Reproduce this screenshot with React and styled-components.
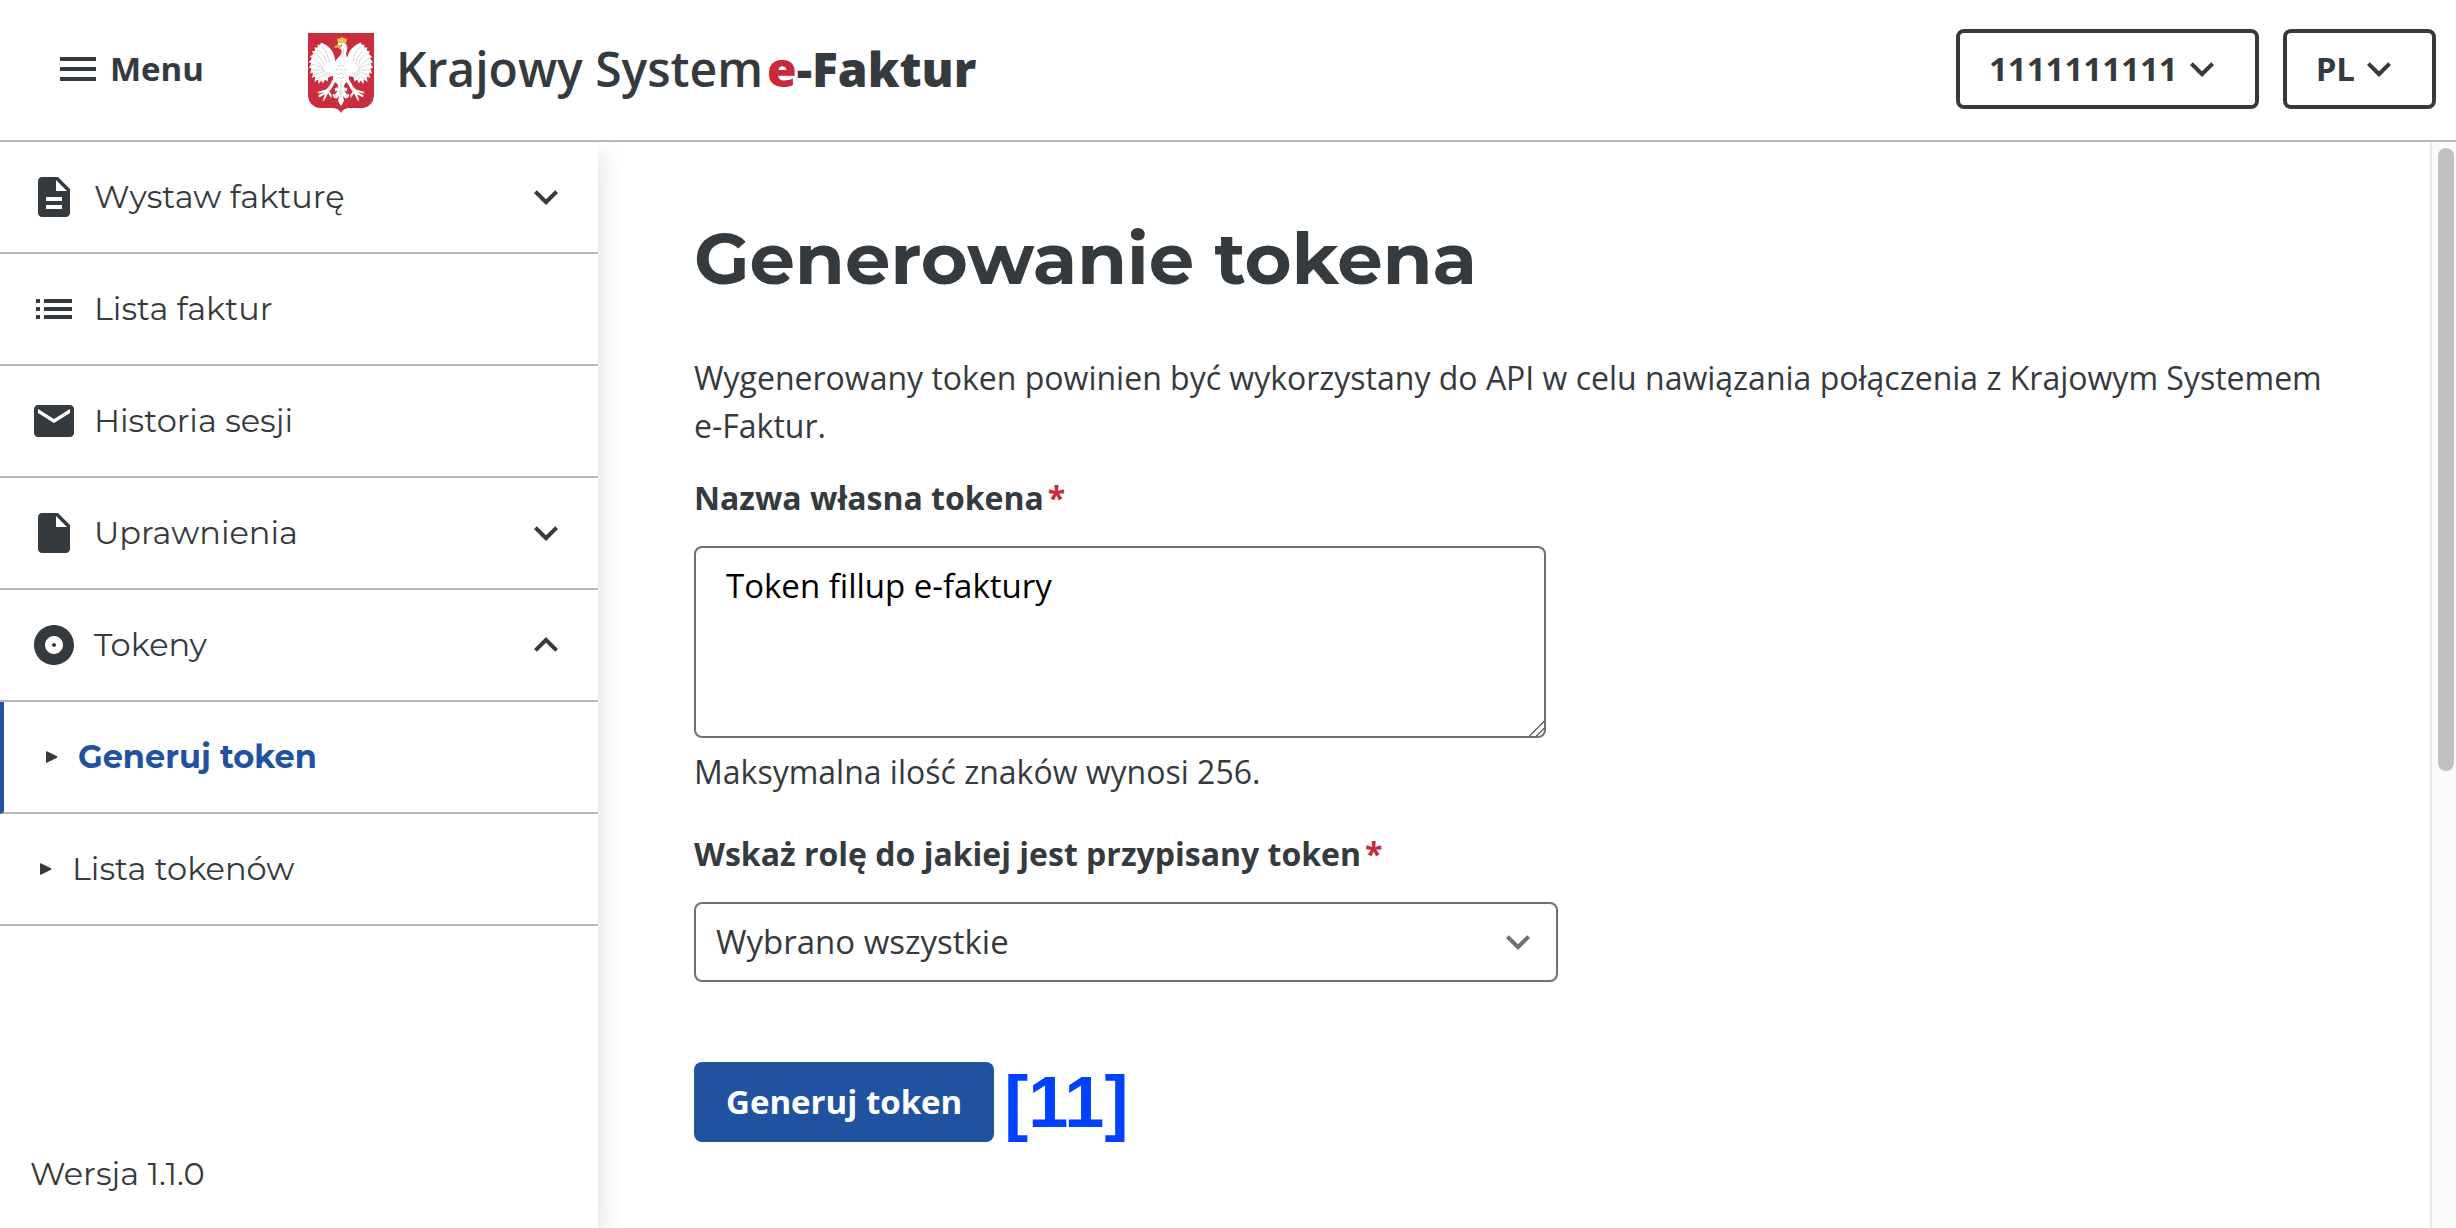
import React from "react";
import styled, { createGlobalStyle } from "styled-components";
import {
  MdMenu,
  MdDescription,
  MdList,
  MdEmail,
  MdInsertDriveFile,
  MdAlbum,
  MdExpandMore,
  MdExpandLess,
} from "react-icons/md";

const color = {
  ink: "#343a3e",
  line: "#b8b8b8",
  field: "#707072",
  blue: "#2152a0",
  red: "#ca293b",
};
const body = `"Open Sans", "Noto Sans", sans-serif`;
const display = `Montserrat, Inter, sans-serif`;

const GlobalStyle = createGlobalStyle`
  *, *::before, *::after { box-sizing: border-box; }
  body {
    margin: 0;
    background: #fff;
    color: ${color.ink};
    font: 400 32px/48px ${body};
  }
  button, select, textarea {
    margin: 0;
    color: inherit;
    font: 400 33px/48px ${body};
  }
  svg { display: block; flex: none; }
`;

const Page = styled.div`
  display: flex;
  flex-direction: column;
  height: 100vh;
  overflow: hidden;
`;

const Header = styled.header`
  display: flex;
  position: relative;
  z-index: 1;
  align-items: center;
  flex: none;
  padding: 29px 20px 31px 54px;
  border-bottom: 2px solid ${color.line};
  background: #fff;
`;

const MenuButton = styled.button`
  display: flex;
  align-items: center;
  gap: 8px;
  padding: 0;
  border: 0;
  background: none;
  font-weight: 700;
  cursor: pointer;
`;

const Brand = styled.a`
  display: flex;
  align-items: center;
  gap: 22px;
  margin-left: 104px;
  color: inherit;
  text-decoration: none;
  font-size: 48px;
  line-height: 64px;
  font-weight: 600;
`;

const Shield = styled.svg`
  width: 66px;
  height: 72px;
  overflow: visible;
`;

const BrandName = styled.span`
  display: flex;
  gap: 4px;
`;

const BrandStrong = styled.strong`
  font-weight: 800;
`;

const Red = styled.span`
  color: ${color.red};
`;

const HeaderActions = styled.div`
  display: flex;
  gap: 24px;
  margin-left: auto;
`;

const OutlineButton = styled.button`
  display: flex;
  align-items: center;
  height: 80px;
  padding: 0 29px;
  border: 4px solid ${color.ink};
  border-radius: 8px;
  background: #fff;
  font-weight: 700;
  cursor: pointer;
`;

const Columns = styled.div`
  display: flex;
  flex: 1;
  min-height: 0;
`;

const Sidebar = styled.nav`
  display: flex;
  flex-direction: column;
  flex: none;
  width: 598px;
  font-family: ${display};
  box-shadow: 4px 12px 24px rgba(0, 0, 0, 0.12);
`;

const NavList = styled.ul`
  margin: 0;
  padding: 0;
  list-style: none;
`;

const NavRow = styled.a`
  display: flex;
  align-items: center;
  gap: 16px;
  height: 112px;
  padding: 0 28px 0 30px;
  border-bottom: 2px solid ${color.line};
  color: inherit;
  text-decoration: none;
`;

const NavText = styled.span`
  flex: 1;
`;

const SubRow = styled(NavRow)`
  gap: 20px;
  padding-left: 40px;
  ${(p) =>
    p.$active &&
    `padding-left: 42px;
     border-left: 4px solid ${color.blue};
     font-weight: 700;
     color: ${color.blue};`}
`;

const Version = styled.p`
  margin: auto 0 0;
  padding: 0 30px 30px;
`;

const Main = styled.main`
  flex: 1;
  min-width: 0;
  padding: 68px 96px 0;
`;

const Title = styled.h1`
  margin: 0 0 48px;
  font: 700 72px/96px ${display};
`;

const Intro = styled.p`
  margin: 0 0 24px;
`;

const Field = styled.div`
  display: flex;
  flex-direction: column;
  align-items: flex-start;
  margin-bottom: ${(p) => p.$after}px;
`;

const Label = styled.label`
  display: flex;
  gap: 4px;
  margin-bottom: 24px;
  font-weight: 700;
`;

const TextArea = styled.textarea`
  width: 852px;
  max-width: 100%;
  height: 192px;
  padding: 14px 30px;
  border: 2px solid ${color.field};
  border-radius: 8px;
  background: #fff;
  color: #000;
  resize: both;

  &::-webkit-resizer {
    background: linear-gradient(
      135deg,
      transparent 48%,
      #6b6b6b 48% 55%,
      transparent 55% 72%,
      #6b6b6b 72% 79%,
      transparent 79%
    );
  }
`;

const Hint = styled.p`
  margin: 10px 0 0;
`;

const SelectBox = styled.div`
  display: grid;
  align-items: center;
  width: 864px;
  max-width: 100%;
  > * { grid-area: 1 / 1; }
  > svg {
    justify-self: end;
    margin-right: 16px;
    color: ${color.field};
    pointer-events: none;
  }
`;

const Select = styled.select`
  appearance: none;
  width: 100%;
  height: 80px;
  padding: 0 20px;
  border: 2px solid ${color.field};
  border-radius: 8px;
  background: #fff;
`;

const Actions = styled.div`
  display: flex;
  align-items: center;
  gap: 10px;
`;

const PrimaryButton = styled.button`
  height: 80px;
  padding: 0 32px;
  border: 0;
  border-radius: 8px;
  background: ${color.blue};
  color: #fff;
  font-weight: 700;
  cursor: pointer;
`;

const StepMark = styled.span`
  color: #0040ff;
  font: 700 72px/80px "Liberation Sans", Arial, sans-serif;
`;

const ScrollTrack = styled.div`
  flex: none;
  width: 26px;
  padding: 6px 2px 6px 6px;
  border-left: 2px solid #e8e8e8;
  background: #fafafa;
`;

const ScrollThumb = styled.div`
  height: 58%;
  border-radius: 8px;
  background: #c1c1c1;
`;

function Wing() {
  return (
    <>
      <path
        fill="#fff"
        d="M27 26C26 19 21 12 13 9.500L12 12 9.500 11.500 9.800 14.500 6.500 14.500 7.400 17.500 4 18.500 5.400 21 2 23.500 4 25.500 1 29 3.300 30.500 1 35 3.600 35.500 2 40.500 5 39.800 4 45 7.200 43.500 6.500 49 10 46.500 10.500 51 13.500 47.500 15 50.500 17 46.500 19.500 48.500 20.500 44 25 43 28 36Z"
      />
      <path
        fill="none"
        stroke="#c9c6cf"
        strokeWidth="0.7"
        d="M13 13C18 18 21 24 21 30M9.500 16C15 21 18 26 18.500 31M7 20C12 24 15 28 16 33M4 25C9 28 13 31 15 35M3.500 31C9 32 12 34 16 36M4 37C9 37 13 37 17 37M6 42 17 38M9 46 19 39M13.500 46 20 40M18 45 22 39"
      />
      <path
        fill="none"
        stroke="#fff"
        strokeWidth="3.200"
        strokeLinecap="round"
        strokeLinejoin="round"
        d="M27 46 22 55 18 59"
      />
      <path
        fill="none"
        stroke="#fff"
        strokeWidth="2"
        strokeLinecap="round"
        strokeLinejoin="round"
        d="M20 57 11 59.500M19 59 11.500 63M19.500 59 16 66M20 58 23 63"
      />
      <path fill="#e5b13a" d="M9.500 58.500l2-.5v2.300l-2 .4zM15 66l2 .2-.8 2.300-1.700-.6zM22 62.500l2 .2-.2 2.100-1.500-.2z" />
    </>
  );
}

function Emblem() {
  return (
    <Shield viewBox="0 0 66 72" aria-hidden="true">
      <path fill="#cb2d40" d="M0 0H66V63Q65 73 55 75H41Q35 75.500 33 80 31 75.500 25 75H11Q1 73 0 63Z" />
      <Wing />
      <g transform="translate(66 0) scale(-1 1)">
        <Wing />
      </g>
      <path
        fill="#fff"
        d="M29.500 11C31 8.800 38 9 39 13 40 17 37.500 19 38.500 23 40 28 43 31 41.500 39L40.500 48 37 50.500 35.500 54 39.500 55.500 38.500 58.500 36 57.500 39 61.500 41.500 61 40.500 64.500 37.500 65.500 35 63 36 68 33 73 30 68 31 63 28.500 65.500 25.500 64.500 24.500 61 27 61.500 30 57.500 27.500 58.500 26.500 55.500 30.500 54 29 50.500 25.500 48 24.500 39C23 32 28 27 32.500 22 34.500 19 34 16 31.500 15.500Z"
      />
      <path
        fill="none"
        stroke="#c9c6cf"
        strokeWidth="0.700"
        d="M35.500 15Q37 20 33 25M29 32l2 1.500 2-1.500 2 1.500 2-1.500M28 36l2 1.500 3-1.500 2.500 1.500L38 36M28 40l2.500 1.500L33 40l2.500 1.500L38 40M29.500 44l3.500 1.500 3.500-1.500M33 49v17M31 58l2 3 2-3"
      />
      <path fill="#e5b13a" d="M31.500 12 27.500 12.300 26 15 30 14.500 31.500 16 34 13.500Z" />
      <path fill="#efc14d" d="M30 10 28.800 5.500 31 6 32 4.500 33 5 34 3.500 35 5 36.200 4.500 37 6 39.200 5.500 38 10Z" />
      <circle cx="33.500" cy="12.300" r="0.600" fill="#343a3f" />
    </Shield>
  );
}

function Marker() {
  return (
    <svg width="12" height="12" viewBox="0 0 12 12" aria-hidden="true">
      <path fill={color.ink} d="M0 0.500Q0 0 0.800 0.200L11 5.300Q12 6 11 6.700L0.800 11.800Q0 12 0 11.500Z" />
    </svg>
  );
}

const sections = [
  { text: "Wystaw fakturę", Icon: MdDescription, Arrow: MdExpandMore },
  { text: "Lista faktur", Icon: MdList },
  { text: "Historia sesji", Icon: MdEmail },
  { text: "Uprawnienia", Icon: MdInsertDriveFile, Arrow: MdExpandMore },
  {
    text: "Tokeny",
    Icon: MdAlbum,
    Arrow: MdExpandLess,
    items: [{ text: "Generuj token", active: true }, { text: "Lista tokenów" }],
  },
];

export default function App() {
  return (
    <Page>
      <GlobalStyle />
      <Header>
        <MenuButton type="button">
          <MdMenu size={48} />
          Menu
        </MenuButton>
        <Brand href="#">
          <Emblem />
          <BrandName>
            <span>Krajowy System</span>
            <BrandStrong>
              <Red>e</Red>-Faktur
            </BrandStrong>
          </BrandName>
        </Brand>
        <HeaderActions>
          <OutlineButton type="button">
            1111111111
            <MdExpandMore size={48} />
          </OutlineButton>
          <OutlineButton type="button">
            PL
            <MdExpandMore size={48} />
          </OutlineButton>
        </HeaderActions>
      </Header>
      <Columns>
        <Sidebar>
          <NavList>
            {sections.map(({ text, Icon, Arrow, items }) => (
              <li key={text}>
                <NavRow href="#">
                  <Icon size={48} />
                  <NavText>{text}</NavText>
                  {Arrow && <Arrow size={48} />}
                </NavRow>
                {items && (
                  <NavList>
                    {items.map((item) => (
                      <li key={item.text}>
                        <SubRow href="#" $active={item.active}>
                          <Marker />
                          <NavText>{item.text}</NavText>
                        </SubRow>
                      </li>
                    ))}
                  </NavList>
                )}
              </li>
            ))}
          </NavList>
          <Version>Wersja 1.1.0</Version>
        </Sidebar>
        <Main>
          <Title>Generowanie tokena</Title>
          <Intro>
            Wygenerowany token powinien być wykorzystany do API w celu nawiązania połączenia z Krajowym Systemem
            e-Faktur.
          </Intro>
          <Field $after={34}>
            <Label htmlFor="token-name">
              Nazwa własna tokena<Red>*</Red>
            </Label>
            <TextArea id="token-name" defaultValue="Token fillup e-faktury" />
            <Hint>Maksymalna ilość znaków wynosi 256.</Hint>
          </Field>
          <Field $after={80}>
            <Label htmlFor="token-role">
              Wskaż rolę do jakiej jest przypisany token<Red>*</Red>
            </Label>
            <SelectBox>
              <Select id="token-role">
                <option>Wybrano wszystkie</option>
              </Select>
              <MdExpandMore size={48} />
            </SelectBox>
          </Field>
          <Actions>
            <PrimaryButton type="button">Generuj token</PrimaryButton>
            <StepMark>[11]</StepMark>
          </Actions>
        </Main>
        <ScrollTrack aria-hidden="true">
          <ScrollThumb />
        </ScrollTrack>
      </Columns>
    </Page>
  );
}
